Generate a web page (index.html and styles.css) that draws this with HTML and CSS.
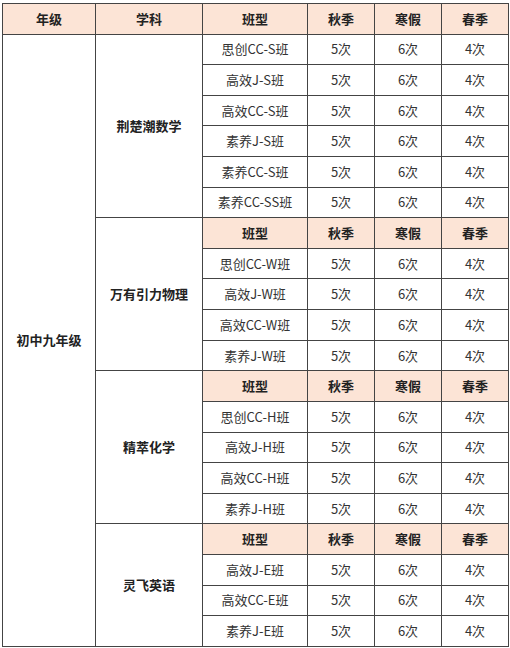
FILE: index.html
```html
<!DOCTYPE html>
<html lang="zh">
<head>
<meta charset="utf-8">
<link rel="stylesheet" href="styles.css">
</head>
<body>
<table class="schedule">
  <colgroup>
    <col class="c-grade"><col class="c-subj"><col class="c-type"><col class="c-n"><col class="c-n"><col class="c-n2">
  </colgroup>
  <tr class="head"><th>年级</th><th>学科</th><th>班型</th><th>秋季</th><th>寒假</th><th>春季</th></tr>
  <tr><td class="label" rowspan="20">初中九年级</td><td class="label" rowspan="6">荆楚潮数学</td><td>思创CC-S班</td><td>5次</td><td>6次</td><td>4次</td></tr>
  <tr><td>高效J-S班</td><td>5次</td><td>6次</td><td>4次</td></tr>
  <tr><td>高效CC-S班</td><td>5次</td><td>6次</td><td>4次</td></tr>
  <tr><td>素养J-S班</td><td>5次</td><td>6次</td><td>4次</td></tr>
  <tr><td>素养CC-S班</td><td>5次</td><td>6次</td><td>4次</td></tr>
  <tr><td>素养CC-SS班</td><td>5次</td><td>6次</td><td>4次</td></tr>
  <tr class="head"><td class="label" rowspan="5">万有引力物理</td><th>班型</th><th>秋季</th><th>寒假</th><th>春季</th></tr>
  <tr><td>思创CC-W班</td><td>5次</td><td>6次</td><td>4次</td></tr>
  <tr><td>高效J-W班</td><td>5次</td><td>6次</td><td>4次</td></tr>
  <tr><td>高效CC-W班</td><td>5次</td><td>6次</td><td>4次</td></tr>
  <tr><td>素养J-W班</td><td>5次</td><td>6次</td><td>4次</td></tr>
  <tr class="head"><td class="label" rowspan="5">精萃化学</td><th>班型</th><th>秋季</th><th>寒假</th><th>春季</th></tr>
  <tr><td>思创CC-H班</td><td>5次</td><td>6次</td><td>4次</td></tr>
  <tr><td>高效J-H班</td><td>5次</td><td>6次</td><td>4次</td></tr>
  <tr><td>高效CC-H班</td><td>5次</td><td>6次</td><td>4次</td></tr>
  <tr><td>素养J-H班</td><td>5次</td><td>6次</td><td>4次</td></tr>
  <tr class="head"><td class="label" rowspan="4">灵飞英语</td><th>班型</th><th>秋季</th><th>寒假</th><th>春季</th></tr>
  <tr><td>高效J-E班</td><td>5次</td><td>6次</td><td>4次</td></tr>
  <tr><td>高效CC-E班</td><td>5次</td><td>6次</td><td>4次</td></tr>
  <tr><td>素养J-E班</td><td>5次</td><td>6次</td><td>4次</td></tr>
</table>
</body>
</html>
```

FILE: styles.css
```css
html, body {
  margin: 0;
  padding: 0;
  background: #ffffff;
}
body {
  padding: 3px 0 0 2px;
  font-family: "Noto Sans CJK SC", "Noto Sans", "Liberation Sans", sans-serif;
  color: #333333;
}
.schedule {
  border-collapse: collapse;
  table-layout: fixed;
  width: 506px;
  font-size: 13px;
}
.c-grade { width: 93px; }
.c-subj { width: 107px; }
.c-type { width: 105px; }
.c-n { width: 67px; }
.c-n2 { width: 67px; }
.schedule tr {
  height: 30.62px;
}
.schedule th,
.schedule td {
  border: 1px solid #444444;
  text-align: center;
  vertical-align: middle;
  padding: 0;
  line-height: 16px;
}
.schedule th {
  background: #fce4d6;
  font-weight: bold;
  color: #222222;
}
.schedule td.label {
  background: #ffffff;
  font-weight: bold;
  color: #222222;
}
```
